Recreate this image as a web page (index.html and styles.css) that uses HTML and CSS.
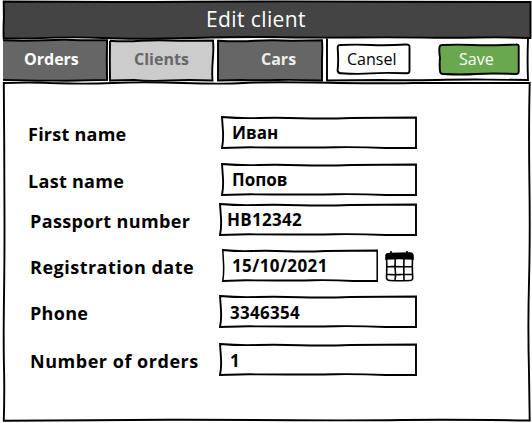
FILE: index.html
```html
<!DOCTYPE html>
<html lang="en">
<head>
<meta charset="utf-8">
<title>Edit client</title>
<link rel="stylesheet" href="styles.css">
</head>
<body>
<svg class="defs" aria-hidden="true">
  <symbol id="field" viewBox="0 0 196 33" preserveAspectRatio="none">
    <path d="M1 1 Q20 2.6 38 2 T80 2.2 T130 2 L195 1.5 V32 L165 32 Q140 30.9 115 31.2 T70 31.5 T30 31.3 L1 32 Q2.6 24 1.9 14 Z"/>
  </symbol>
</svg>
<main class="window">
  <header class="title-bar">
    <svg class="sketch" viewBox="0 0 528 39"><path d="M.7 1.5 Q100 2.3 190 1.7 T380 1.7 L527.5 2 V38 Q500 37 475 37.5 T420 37.6 T350 37.5 T280 37.2 T190 38 T100 38 T30 38.4 L.7 38.5 Q.3 28 .9 17 Z"/></svg>
    <h1 class="title">Edit client</h1>
  </header>
  <div class="toolbar">
    <nav class="tabs">
      <a class="tab orders"><svg class="sketch edge" viewBox="0 0 107 43"><path class="fill" d="M0 1H106V42H0Z"/><path d="M0 1 Q20 2 42 1 T78 1 L105 1 Q104.3 20 105 41 L65 42 Q50 41.6 35 42 L0 41"/></svg><span>Orders</span></a>
      <a class="tab clients"><svg class="sketch" viewBox="0 0 105 43"><path d="M1 1.7 Q15 2.7 32 1.7 T70 1.7 L104 1.5 Q104.8 9 103.8 21 T103.5 41.5 Q80 40.6 60 41.5 T25 41 L1 41.5 Q.7 20 1 1.7"/></svg><span>Clients</span></a>
      <a class="tab cars"><svg class="sketch" viewBox="0 0 107 43"><path d="M1 1.7 Q22 2.7 38 1.7 T75 1.7 L105 1.3 Q105.6 9 105 21 L105 41.5 Q75 40.5 60 41 T25 41 L1 41.5 Z"/></svg><span>Cars</span></a>
    </nav>
    <div class="actions">
      <svg class="sketch" viewBox="0 0 204 43"><path d="M1 -.5 V41.5 L55 41 Q80 41.6 110 41 T160 40.6 L202 41 Q201.2 22 202 0"/></svg>
      <button class="button cansel"><svg class="sketch" viewBox="0 0 75 32"><path d="M4 2 Q20 1.2 35 2 T70 1.5 Q73.7 1.3 73.5 4 V27.5 Q73.5 30.3 71 30.3 Q48 29.4 35 30.4 T5 30.3 Q2 30.3 1.6 27.5 Q2.7 18 1.7 5 Q1.5 2 4 2Z"/></svg><span>Cansel</span></button>
      <button class="button save"><svg class="sketch" viewBox="0 0 82 33"><path d="M4 2 Q20 1.3 35 2 T78 1.5 Q81 1.3 80.7 4 V28.5 Q80.7 31 78 31 Q53 30 38 31 T5 31 Q2.2 31 2 28 Q1.3 21 2 15 Q.9 8 1.5 4 Q2 2 4 2Z"/></svg><span>Save</span></button>
    </div>
  </div>
  <section class="content">
    <svg class="sketch" viewBox="0 0 528 341"><path d="M.8 1 Q28 .2 55 1.2 T110 1 T180 1 T240 1 T325 .7 T410 1 L526.7 1 Q525.6 45 526.4 100 T526 200 T526 290 L526.7 338.5 Q450 337.4 400 338 T290 338.2 T180 337.7 T90 338.2 L.8 338.7 Q1.6 310 1 285 T1 215 T1.5 140 T1.2 60 Z"/></svg>
    <div class="form">
      <div class="row first"><span class="label l1">First name</span><div class="field"><svg class="sketch"><use href="#field"/></svg><span>Иван</span></div></div>
      <div class="row last"><span class="label l2">Last name</span><div class="field"><svg class="sketch"><use href="#field"/></svg><span>Попов</span></div></div>
      <div class="row passport wide"><span class="label l3">Passport number</span><div class="field"><svg class="sketch"><use href="#field"/></svg><span>HB12342</span></div></div>
      <div class="row date"><span class="label l4">Registration date</span><div class="field"><svg class="sketch"><use href="#field"/></svg><span>15/10/2021</span></div>
        <svg class="calendar" viewBox="0 0 29 32"><path class="head" d="M1 9V6Q1 3.5 4 3.5L25 3Q28 3 28 6V9Q14 8 1 9Z"/><path d="M6 1V5M22 1V5M1.5 8Q2.1 15 1.5 27Q1.5 30.5 5 30.5Q14 31 25 30.5Q28 30.5 27.7 27Q27 17 27.6 8M10.3 9Q9.8 16 10.3 21T10 30M19 9Q18.6 16 19 30M2 16.7Q10 16.5 17 16.8L27 16.6M2 24.3Q10 25.3 19 24.3L27 24.5"/></svg>
      </div>
      <div class="row phone wide"><span class="label l5">Phone</span><div class="field"><svg class="sketch"><use href="#field"/></svg><span>3346354</span></div></div>
      <div class="row number wide"><span class="label l6">Number of orders</span><div class="field"><svg class="sketch"><use href="#field"/></svg><span>1</span></div></div>
    </div>
  </section>
</main>
</body>
</html>
```
FILE: styles.css
```css
* { box-sizing: border-box; }
body { margin: 0; background: #fff; color: #000; font-family: "Open Sans", "Noto Sans", sans-serif; }
.defs { display: none; }
.window { width: 528px; height: 423px; margin-left: 3px; }
.sketch { position: absolute; inset: 0; width: 100%; height: 100%; overflow: visible; fill: none; stroke: #000; stroke-width: 1.9; }
.sketch + * { position: relative; }
.title-bar { position: relative; height: 39px; display: flex; justify-content: center; }
.title-bar .sketch { fill: #444; }
.title { margin: 0; color: #fff; font-size: 21px; font-weight: 400; line-height: 39px; letter-spacing: .4px; padding-right: 22px; white-space: nowrap; }
.toolbar { display: flex; height: 43px; }
.tabs { display: flex; width: 323px; }
.tab { position: relative; height: 43px; line-height: 40px; font-size: 16px; font-weight: 700; color: #fff; }
.orders { width: 106px; padding-left: 21px; }
.clients { width: 108px; padding-left: 25px; color: #666; }
.cars { width: 107px; padding-left: 44px; color: #eee; }
.cars .sketch { fill: #666; }
.orders .fill { fill: #666; stroke: none; }
.clients .sketch { fill: #ccc; width: 105px; }
.actions { position: relative; width: 204px; display: flex; align-items: flex-start; gap: 27px; padding: 4px 0 0 10px; }
.button { position: relative; border: 0; padding: 0; background: none; font: 400 16px/31px "Open Sans", sans-serif; text-align: left; }
.cansel { width: 75px; height: 32px; padding-left: 11px; color: #000; }
.save { width: 82px; height: 33px; padding-left: 21px; color: #fff; }
.save .sketch { fill: #6aa84f; }
.content { position: relative; height: 341px; }
.form { position: relative; padding: 34px 0 0 25px; }
.row { display: flex; height: 33px; align-items: flex-start; font-weight: 700; }
.label { width: 193px; padding-top: 4px; font-size: 18px; line-height: 28px; white-space: nowrap; }
.l1 { letter-spacing: .25px; }
.l2 { letter-spacing: .3px; }
.l3 { letter-spacing: .37px; }
.l4 { letter-spacing: .5px; }
.l5 { letter-spacing: .3px; }
.l6 { letter-spacing: .53px; }
.field { position: relative; width: 196px; height: 33px; padding-left: 11px; font-size: 17px; line-height: 34px; white-space: nowrap; }
.last { margin-top: 14px; }
.passport { margin-top: 7px; }
.date { margin-top: 13px; padding-left: 2px; }
.date .field { width: 156px; padding-left: 10px; letter-spacing: .4px; }
.phone { margin-top: 13px; }
.number { margin-top: 15px; }
.wide { padding-left: 2px; }
.wide .label { width: 189px; }
.wide .field { width: 198px; padding-left: 11px; line-height: 35px; letter-spacing: .3px; }
.passport .field { padding-left: 8px; line-height: 34px; }
.date .label { width: 192px; }
.calendar { width: 29px; height: 32px; margin: 1px 0 0 7px; fill: none; stroke: #000; stroke-width: 1.6; }
.calendar .head { fill: #000; }
```
